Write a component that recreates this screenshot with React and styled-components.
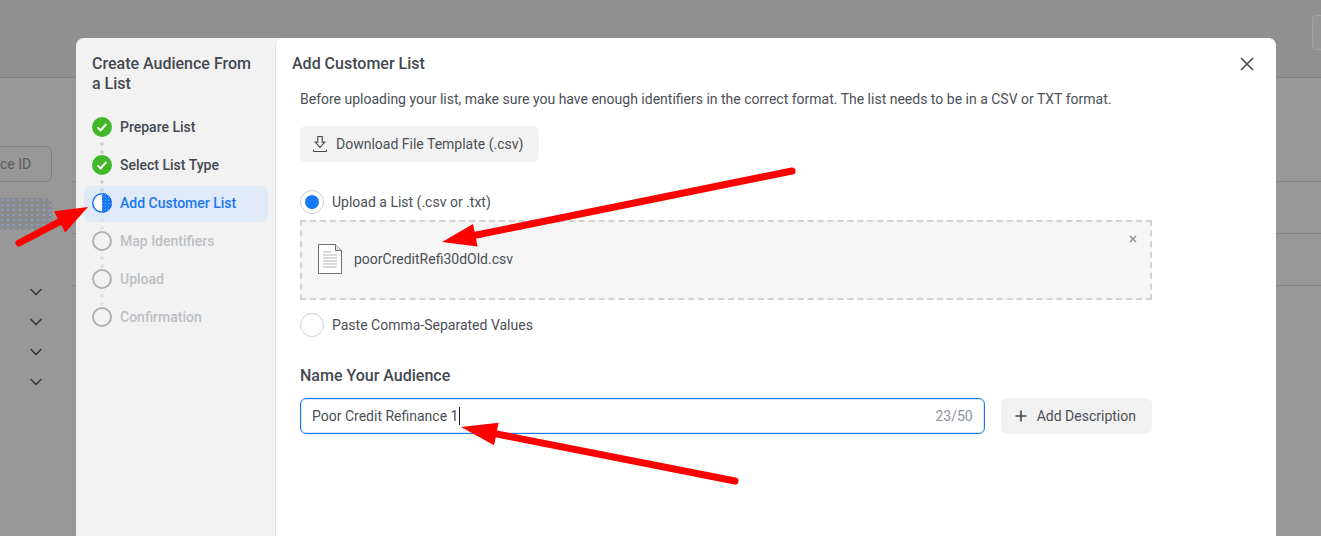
import React from "react";
import styled, { createGlobalStyle } from "styled-components";
import { ChevronDown } from "lucide-react";

const GlobalStyle = createGlobalStyle`
  html, body {
    margin: 0;
    padding: 0;
    height: 100%;
    overflow: hidden;
    font-family: Roboto, "Liberation Sans", sans-serif;
    -webkit-font-smoothing: antialiased;
  }
`;

const Page = styled.div`
  position: relative;
  width: 1321px;
  height: 536px;
  overflow: hidden;
  background: #989898;
`;

/* dimmed page behind the modal */
const TopBar = styled.div`
  height: 78px;
  box-sizing: border-box;
  background: #909090;
  border-bottom: 1px solid #838383;
  display: flex;
  justify-content: flex-end;
  padding-top: 15px;
`;

const TopButton = styled.div`
  width: 20px;
  height: 35px;
  margin-right: -11px;
  box-sizing: border-box;
  border: 1px solid #a2a2a2;
  border-radius: 4px;
  background: #959595;
`;

const BackBody = styled.div`
  display: flex;
`;

const BackSide = styled.div`
  width: 72px;
  flex: none;
  padding-top: 68px;
  display: flex;
  flex-direction: column;
`;

const BackInput = styled.div`
  width: 52px;
  height: 36px;
  box-sizing: border-box;
  border: 1px solid #848484;
  border-left: none;
  border-radius: 0 6px 6px 0;
  font-size: 14px;
  line-height: 34px;
  color: #5c5c5c;
  text-align: right;
  padding-right: 24px;
  white-space: nowrap;
`;

const BackPill = styled.div`
  width: 52px;
  height: 32px;
  margin-top: 16px;
  border-radius: 0 6px 6px 0;
  background: radial-gradient(circle 1px at 2px 2px, #86a0c6 90%, transparent) 0 0 / 6px 5px, #8b8b8b;
`;

const BackChevrons = styled.div`
  margin-top: 52px;
  display: flex;
  flex-direction: column;
  gap: 10px;
  padding-left: 26px;
  color: #3a3a3a;
  svg {
    display: block;
  }
`;

const BackRows = styled.div`
  flex: 1;
  padding-top: 103px;
`;

const BackRow = styled.div`
  height: 52px;
  box-sizing: border-box;
  border-bottom: 1px solid #848484;
  &:first-child {
    height: 0;
  }
`;

/* modal */
const Modal = styled.div`
  position: absolute;
  left: 76px;
  top: 38px;
  width: 1200px;
  height: 520px;
  display: flex;
  border-radius: 8px 8px 0 0;
  overflow: hidden;
  background: #f2f2f2;
`;

const Sidebar = styled.aside`
  width: 199px;
  flex: none;
  box-sizing: border-box;
  padding: 15px 8px 0;
`;

const SideTitle = styled.h2`
  margin: 0 0 16px 8px;
  max-width: 170px;
  padding-top: 1px;
  font-size: 16px;
  line-height: 20px;
  font-weight: 500;
  color: #444950;
`;

const StepList = styled.div`
  display: flex;
  flex-direction: column;
  gap: 2px;
`;

const Step = styled.div`
  position: relative;
  width: 184px;
  height: 36px;
  box-sizing: border-box;
  padding: 0 0 2px 8px;
  display: flex;
  align-items: center;
  gap: 8px;
  border-radius: 6px;
  background: ${(p) => (p.$state === "active" ? "#dfe9f7" : "transparent")};
  color: ${(p) =>
    p.$state === "active" ? "#1877f2" : p.$state === "done" ? "#444950" : "#bcc0c4"};
  font-size: 14px;
  font-weight: 500;
`;

const StepDots = styled.span`
  position: absolute;
  left: 16px;
  top: 32px;
  width: 4px;
  height: 12px;
  z-index: 1;
  background: radial-gradient(circle 2px at 2px 2px, ${(p) => p.$color} 98%, transparent) 0 0 / 4px 8px repeat-y;
`;

const StepIconSvg = styled.svg`
  width: 20px;
  height: 20px;
  flex: none;
  display: block;
`;

const Content = styled.main`
  position: relative;
  flex: 1;
  padding: 16px 16px 0;
  background: #fff;
  border-left: 1px solid #e4e4e4;
  border-radius: 8px 0 0 0;
`;

const Title = styled.h1`
  margin: 0;
  font-size: 16px;
  line-height: 20px;
  font-weight: 500;
  color: #444950;
`;

const CloseBtn = styled.div`
  position: absolute;
  top: 16px;
  right: 20px;
  width: 16px;
  height: 20px;
  display: flex;
  align-items: center;
  color: #444950;
`;

const Body = styled.div`
  width: 852px;
  margin-left: 8px;
  padding-top: 15px;
`;

const Desc = styled.p`
  margin: 0;
  font-size: 14px;
  line-height: 20px;
  color: #4b4f56;
  white-space: nowrap;
`;

const GrayButton = styled.div`
  height: 36px;
  box-sizing: border-box;
  display: inline-flex;
  align-items: center;
  gap: 8px;
  padding: 0 16px 0 12px;
  border-radius: 6px;
  background: #f2f2f2;
  color: #4b4f56;
  font-size: 14px;
  white-space: nowrap;
  svg {
    flex: none;
    display: block;
  }
`;

const DownloadRow = styled.div`
  margin-top: 17px;
  height: 36px;
`;

const RadioRow = styled.div`
  display: flex;
  align-items: center;
  gap: 8px;
  height: 24px;
  margin-top: ${(p) => p.$top}px;
  font-size: 14px;
  color: #4b4f56;
`;

const Radio = styled.span`
  width: 24px;
  height: 24px;
  flex: none;
  box-sizing: border-box;
  border: 1px solid #ccd0d5;
  border-radius: 50%;
  display: flex;
  align-items: center;
  justify-content: center;
  background: #fff;
  &::after {
    content: "";
    display: ${(p) => (p.$checked ? "block" : "none")};
    width: 14px;
    height: 14px;
    border-radius: 50%;
    background: #1877f2;
  }
`;

const DropZone = styled.div`
  position: relative;
  height: 80px;
  margin-top: 6px;
  box-sizing: border-box;
  padding: 22px 16px 0;
  display: flex;
  gap: 12px;
  background: #f6f6f6;
  border: 2px dashed #d2d2d2;
  font-size: 14px;
  color: #4b4f56;
  svg {
    flex: none;
    display: block;
  }
`;

const FileName = styled.span`
  line-height: 30px;
`;

const RemoveFile = styled.div`
  position: absolute;
  top: 12px;
  right: 12px;
  width: 10px;
  height: 10px;
  color: #8d949e;
  svg {
    display: block;
  }
`;

const Label = styled.div`
  margin-top: 29px;
  font-size: 16px;
  line-height: 20px;
  font-weight: 500;
  color: #444950;
`;

const NameRow = styled.div`
  margin-top: 12px;
  display: flex;
  gap: 16px;
`;

const NameField = styled.div`
  flex: 1;
  height: 36px;
  box-sizing: border-box;
  padding: 0 11px;
  display: flex;
  align-items: center;
  border: 1px solid #1877f2;
  border-radius: 6px;
  box-shadow: inset 0 0 0 1px rgba(24, 119, 242, 0.18);
  font-size: 14px;
  color: #4b4f56;
`;

const Caret = styled.span`
  width: 1px;
  height: 18px;
  margin-left: 1px;
  background: #1c1e21;
`;

const Counter = styled.span`
  margin-left: auto;
  color: #8d949e;
`;

const ArrowLayer = styled.svg`
  position: absolute;
  inset: 0;
  width: 1321px;
  height: 536px;
  pointer-events: none;
`;

function Check() {
  return (
    <StepIconSvg viewBox="0 0 20 20">
      <circle cx="10" cy="10" r="10" fill="#42b72a" />
      <path d="M5.6 10.4l3 3 5.8-6.4" fill="none" stroke="#fff" strokeWidth="2" />
    </StepIconSvg>
  );
}

function HalfCircle() {
  return (
    <StepIconSvg viewBox="0 0 20 20">
      <defs>
        <pattern id="halfDots" width="3" height="3" patternUnits="userSpaceOnUse">
          <rect width="3" height="3" fill="#1877f2" />
          <circle cx="1.5" cy="1.5" r="0.5" fill="#8fbcf8" />
        </pattern>
      </defs>
      <circle cx="10" cy="10" r="9.25" fill="#fff" stroke="#1877f2" strokeWidth="1.5" />
      <path d="M10 0a10 10 0 0 1 0 20z" fill="url(#halfDots)" />
    </StepIconSvg>
  );
}

function EmptyCircle() {
  return (
    <StepIconSvg viewBox="0 0 20 20">
      <circle cx="10" cy="10" r="9" fill="none" stroke="#b0b0b0" strokeWidth="2" />
    </StepIconSvg>
  );
}

const steps = [
  { label: "Prepare List", state: "done" },
  { label: "Select List Type", state: "done" },
  { label: "Add Customer List", state: "active" },
  { label: "Map Identifiers", state: "todo" },
  { label: "Upload", state: "todo" },
  { label: "Confirmation", state: "todo" },
];

function StepIcon({ state }) {
  if (state === "done") return <Check />;
  if (state === "active") return <HalfCircle />;
  return <EmptyCircle />;
}

function Arrow({ from, tip, head = 34, wide = 11.5 }) {
  // shaft plus an arrowhead, computed from the two end points
  const dx = tip[0] - from[0];
  const dy = tip[1] - from[1];
  const len = Math.hypot(dx, dy);
  const ux = dx / len;
  const uy = dy / len;
  const bx = tip[0] - ux * head;
  const by = tip[1] - uy * head;
  const a = [bx - uy * wide, by + ux * wide];
  const b = [bx + uy * wide, by - ux * wide];
  return (
    <g>
      <line
        x1={from[0]}
        y1={from[1]}
        x2={bx + ux * 4}
        y2={by + uy * 4}
        stroke="#fe0000"
        strokeWidth="7"
        strokeLinecap="round"
      />
      <polygon points={`${tip[0]},${tip[1]} ${a[0]},${a[1]} ${b[0]},${b[1]}`} fill="#fe0000" />
    </g>
  );
}

export default function App() {
  return (
    <Page>
      <GlobalStyle />
      <TopBar>
        <TopButton />
      </TopBar>
      <BackBody>
        <BackSide>
          <BackInput>ce ID</BackInput>
          <BackPill />
          <BackChevrons>
            {[0, 1, 2, 3].map((i) => (
              <ChevronDown key={i} size={20} strokeWidth={2} />
            ))}
          </BackChevrons>
        </BackSide>
        <BackRows>
          <BackRow />
          <BackRow />
          <BackRow />
        </BackRows>
      </BackBody>

      <Modal>
        <Sidebar>
          <SideTitle>Create Audience From a List</SideTitle>
          <StepList>
            {steps.map((s, i) => (
              <Step key={s.label} $state={s.state}>
                <StepIcon state={s.state} />
                {s.label}
                {i < steps.length - 1 && (
                  <StepDots $color={i >= 2 ? "#dde3ec" : "#d4d4d4"} />
                )}
              </Step>
            ))}
          </StepList>
        </Sidebar>

        <Content>
          <Title>Add Customer List</Title>
          <CloseBtn>
            <svg width="14" height="14" viewBox="0 0 14 14">
              <path d="M1 1l12 12M13 1L1 13" stroke="currentColor" strokeWidth="1.6" fill="none" />
            </svg>
          </CloseBtn>
          <Body>
            <Desc>
              Before uploading your list, make sure you have enough identifiers in the correct
              format. The list needs to be in a CSV or TXT format.
            </Desc>
            <DownloadRow>
              <GrayButton>
                <svg width="16" height="18" viewBox="0 0 16 18" fill="none" stroke="#444950" strokeWidth="1.1">
                  <path d="M5.8 1.5h4.4v5.6h2.6L8 12.4 3.2 7.1h2.6z" />
                  <path d="M1.5 16.5h13M1.5 14.5v2M14.5 14.5v2" />
                </svg>
                Download File Template (.csv)
              </GrayButton>
            </DownloadRow>

            <RadioRow $top={28}>
              <Radio $checked />
              Upload a List (.csv or .txt)
            </RadioRow>
            <DropZone>
              <svg width="24" height="30" viewBox="0 0 24 30" fill="#fff" stroke="#6f6f6f" strokeWidth="1">
                <path d="M.5.5h17l6 6v23H.5z" />
                <path d="M17.5.5v6h6" fill="#e4e4e4" />
                <path d="M5 8h8M5 11h14M5 14h14M5 17h14M5 20h14M5 23h14" stroke="#b5b5b5" />
              </svg>
              <FileName>poorCreditRefi30dOld.csv</FileName>
              <RemoveFile>
                <svg width="10" height="10" viewBox="0 0 10 10">
                  <path d="M2 2l6 6M8 2L2 8" stroke="currentColor" strokeWidth="1.6" fill="none" />
                </svg>
              </RemoveFile>
            </DropZone>
            <RadioRow $top={13}>
              <Radio />
              Paste Comma-Separated Values
            </RadioRow>

            <Label>Name Your Audience</Label>
            <NameRow>
              <NameField>
                Poor Credit Refinance 1
                <Caret />
                <Counter>23/50</Counter>
              </NameField>
              <GrayButton>
                <svg width="16" height="16" viewBox="0 0 16 16">
                  <path d="M8 2.5v11M2.5 8h11" stroke="#444950" strokeWidth="1.6" fill="none" />
                </svg>
                Add Description
              </GrayButton>
            </NameRow>
          </Body>
        </Content>
      </Modal>

      <ArrowLayer viewBox="0 0 1321 536">
        <Arrow from={[19, 243]} tip={[88, 207]} head={32} wide={12} />
        <Arrow from={[792, 171]} tip={[442, 242]} head={34} />
        <Arrow from={[735, 481]} tip={[461, 427]} head={36} />
      </ArrowLayer>
    </Page>
  );
}
